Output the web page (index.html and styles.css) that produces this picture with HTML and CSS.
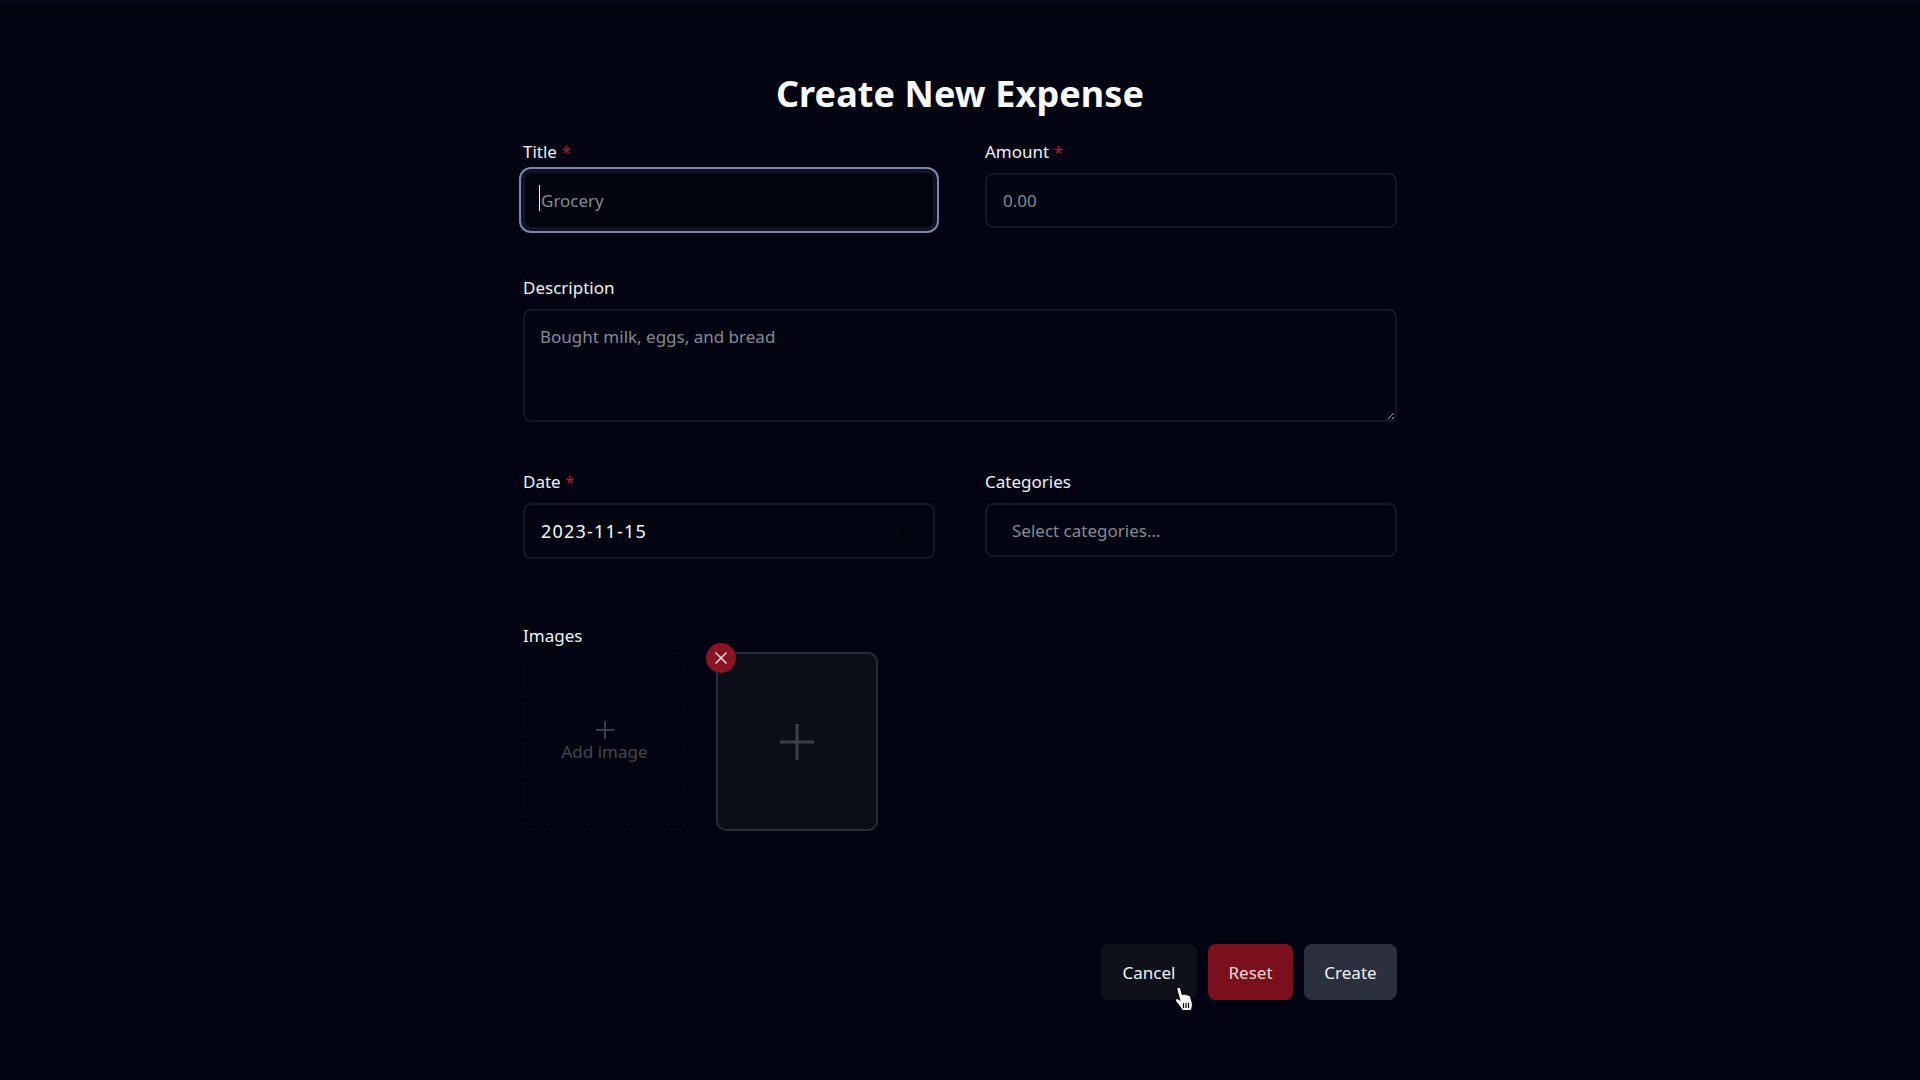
FILE: index.html
```html
<!DOCTYPE html>
<html lang="en">
<head>
    <meta charset="UTF-8">
    <meta name="viewport" content="width=device-width, initial-scale=1.0">
    <title>Create New Expense</title>
    <link rel="stylesheet" href="styles.css">
</head>
<body>
    <main class="container">
        <h1>Create New Expense</h1>

        <form id="expenseForm">
            <div class="row row-first">
                <div class="field">
                    <label for="title">Title <span class="req">*</span></label>
                    <div class="focus-wrap">
                        <input type="text" id="title" class="input input-focus" placeholder="Grocery">
                        <span class="caret"></span>
                    </div>
                </div>
                <div class="field">
                    <label for="amount">Amount <span class="req">*</span></label>
                    <input type="text" id="amount" class="input input-amount" placeholder="0.00">
                </div>
            </div>

            <div class="field field-desc">
                <label for="description">Description</label>
                <textarea id="description" class="input textarea" placeholder="Bought milk, eggs, and bread"></textarea>
            </div>

            <div class="row row-date">
                <div class="field">
                    <label for="date">Date <span class="req">*</span></label>
                    <div class="date-wrap">
                        <input type="text" id="date" class="input date-input" value="2023-11-15">
                        <svg class="date-icon" width="18" height="18" viewBox="0 0 18 18" fill="none" stroke="#02030a" stroke-width="2.5">
                            <path d="M14 3 L9 3 L5 7 L5 15 L13 15"/>
                        </svg>
                    </div>
                </div>
                <div class="field">
                    <label for="categories">Categories</label>
                    <input type="text" id="categories" class="input select-input" placeholder="Select categories...">
                </div>
            </div>

            <div class="field field-images">
                <label>Images</label>
                <div class="image-list">
                    <div class="tile tile-add">
                        <svg width="20" height="20" viewBox="0 0 20 20" stroke="#3a3e4b" stroke-width="2">
                            <path d="M10 1 V19 M1 10 H19"/>
                        </svg>
                        <span>Add image</span>
                    </div>
                    <div class="tile tile-image">
                        <svg width="34" height="36" viewBox="0 0 34 36" stroke="#3c3f4a" stroke-width="3">
                            <path d="M17 0 V36 M0 18 H34"/>
                        </svg>
                        <button type="button" class="remove" aria-label="Remove image">
                            <svg width="14" height="14" viewBox="0 0 14 14" stroke="#f6d9d9" stroke-width="1.5">
                                <path d="M1.5 1.5 L12.5 12.5 M12.5 1.5 L1.5 12.5"/>
                            </svg>
                        </button>
                    </div>
                </div>
            </div>

            <div class="actions">
                <button type="button" class="btn btn-cancel">Cancel</button>
                <button type="reset" class="btn btn-reset">Reset</button>
                <button type="button" class="btn btn-create">Create</button>
                <svg class="cursor" width="20" height="26" viewBox="0 0 20 26">
                    <path d="M4 1.5 C5.2 1 6.2 1.6 6.6 2.8 L8.4 9 L9 8.4 C10 7.8 11 8 11.5 8.9 C12.4 8.3 13.5 8.6 14 9.5 C15 9.1 16 9.5 16.4 10.5 L18 16 C18.8 19 18.3 21.5 17 24.5 L8.5 24.5 C6.5 21.5 4.5 18.5 2 15.5 C1.2 14.4 1.6 13.2 2.6 12.8 C3.6 12.5 4.6 13 5.4 14 L6 14.6 L3 4 C2.7 2.9 3.1 1.9 4 1.5 Z" fill="#fff" stroke="#000" stroke-width="1"/>
                    <path d="M9.5 17 V22 M12 17 V22 M14.5 17 V22" stroke="#000" stroke-width="1.2"/>
                </svg>
            </div>
        </form>
    </main>
</body>
</html>
```

FILE: styles.css
```css
* {
    box-sizing: border-box;
}
html, body {
    height: 100%;
}
body {
    font-family: "Noto Sans", Arial, sans-serif;
    font-size: 17px;
    margin: 0;
    padding: 0;
    background: linear-gradient(#070b1c, #020511 6px);
    color: #f8fafc;
    overflow: hidden;
}
.container {
    width: 874px;
    margin: 0 auto;
    padding-top: 74px;
}
h1 {
    font-size: 36px;
    line-height: 40px;
    font-weight: 700;
    letter-spacing: 0.1px;
    text-align: center;
    margin: 0 0 26px;
    color: #f8fafc;
}
label {
    display: block;
    font-size: 17px;
    line-height: 24px;
    margin-bottom: 9px;
    color: #eef1f6;
}
.req {
    color: #be123c;
}
.row {
    display: grid;
    grid-template-columns: 412px 412px;
    justify-content: space-between;
}
.input {
    display: block;
    width: 100%;
    height: 56px;
    padding: 0 16px;
    font-family: inherit;
    font-size: 17px;
    color: #f8fafc;
    background: #020511;
    border: 2px solid #141824;
    border-radius: 8px;
    outline: none;
}
.input::placeholder {
    color: #858a95;
    opacity: 1;
}
.input-amount {
    height: 55px;
}
.focus-wrap, .date-wrap {
    position: relative;
}
.input-focus {
    height: 58px;
    margin: -2px 0 -1px;
    background: #01030d;
    box-shadow: 0 0 0 2px #0b1126, 0 0 0 4px #7d84a6;
    border-color: #11162a;
}
.caret {
    position: absolute;
    left: 16px;
    top: 14px;
    width: 1px;
    height: 26px;
    background: #e8eaf0;
}
.field-desc {
    margin-top: 48px;
}
.textarea {
    height: 113px;
    padding: 14px 15px;
    resize: vertical;
}
.row-date {
    margin-top: 48px;
}
.date-input {
    font-size: 18px;
    letter-spacing: 1.2px;
}
.date-icon {
    position: absolute;
    right: 20px;
    top: 19px;
}
.select-input {
    height: 54px;
    padding-left: 25px;
}
.field-images {
    margin-top: 65px;
}
.field-images label {
    margin-bottom: 4px;
}
.image-list {
    display: flex;
    gap: 30px;
}
.tile {
    position: relative;
    width: 162px;
    height: 179px;
    border-radius: 10px;
    display: flex;
    flex-direction: column;
    align-items: center;
    justify-content: center;
}
.tile-add {
    width: 163px;
    border: 2px dashed #070a15;
    color: #43474f;
    font-size: 17px;
    line-height: 24px;
}
.tile-image {
    background: #0b0e19;
    border: 2px solid #292d3a;
}
.remove {
    position: absolute;
    top: -11px;
    left: -12px;
    width: 30px;
    height: 30px;
    padding: 0;
    border: none;
    border-radius: 50%;
    background: #8a1424;
    display: flex;
    align-items: center;
    justify-content: center;
}
.actions {
    position: relative;
    display: flex;
    justify-content: flex-end;
    gap: 11px;
    margin-top: 113px;
}
.btn {
    height: 56px;
    padding: 0 20px;
    font-family: inherit;
    font-size: 17px;
    color: #eef1f6;
    border: none;
    border-radius: 8px;
    cursor: pointer;
}
.btn-cancel {
    background: #0e1119;
    width: 96px;
}
.btn-reset {
    background: #7a101c;
    color: #f7d7d7;
    width: 85px;
}
.btn-create {
    background: #2b303c;
    width: 93px;
}
.cursor {
    position: absolute;
    right: 203px;
    top: 42px;
}
```
